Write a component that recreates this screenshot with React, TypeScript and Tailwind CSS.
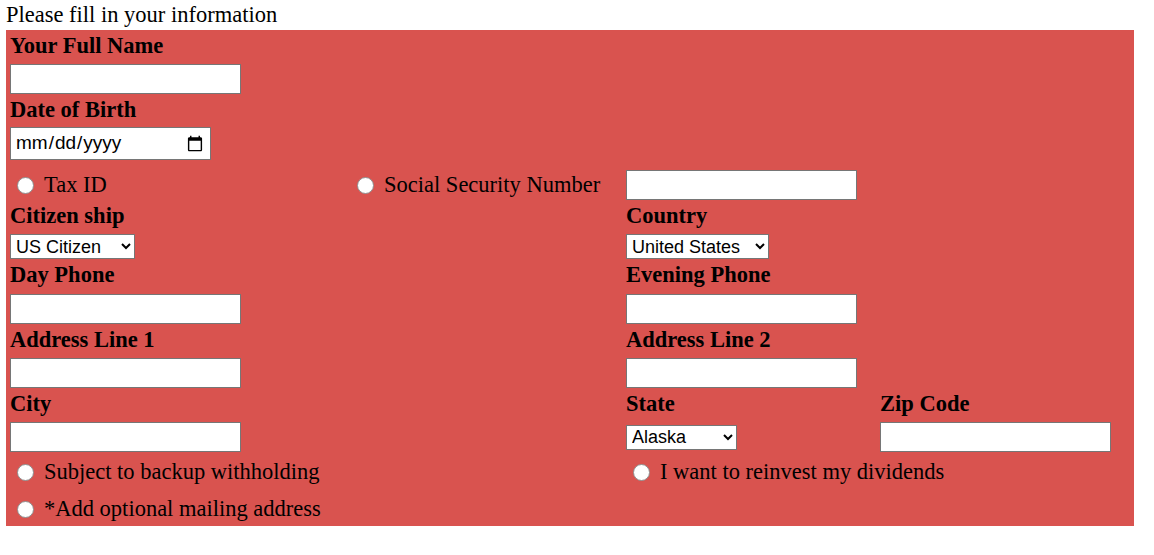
import React from 'react';

const cols = 'grid grid-cols-[340px_276px_254px_1fr]';

function Label({ children }: { children: React.ReactNode }) {
  return <div className="h-[24px] leading-[24px] font-bold whitespace-nowrap">{children}</div>;
}

function TextBox({ width = 'w-[231px]' }: { width?: string }) {
  return (
    <input
      type="text"
      className={`block ${width} h-[30px] border border-[#767676] bg-white px-[3px] text-[18px] font-['Liberation_Sans',Arial,sans-serif] outline-none`}
    />
  );
}

function Choice({ label, name }: { label: string; name: string }) {
  return (
    <label className="flex items-center h-[24px] leading-[24px] whitespace-nowrap">
      <input
        type="radio"
        name={name}
        className="ml-[7px] mr-[10px] w-[17px] h-[17px] shrink-0 appearance-none rounded-full border border-[#8f8f8f] bg-white"
      />
      {label}
    </label>
  );
}

function Picker({ width, options }: { width: string; options: string[] }) {
  return (
    <select
      className={`block ${width} h-[25px] border border-[#767676] bg-white pl-[1px] text-[18px] text-black font-['Liberation_Sans',Arial,sans-serif]`}
    >
      {options.map((o) => (
        <option key={o}>{o}</option>
      ))}
    </select>
  );
}

export default function App() {
  return (
    <div className="w-[1154px] h-[555px] bg-white px-[6px] text-black text-[22.5px] font-['Liberation_Serif','Times_New_Roman',serif]">
      <div className="h-[30px] pt-[1px] leading-[28px]">Please fill in your information</div>

      <form className="w-[1128px] bg-[#d9534f] pl-[4px] pb-[5px]">
        <div className="pt-[4px]">
          <Label>Your Full Name</Label>
        </div>
        <div className="mt-[6px]">
          <TextBox />
        </div>

        <div className="mt-[4px]">
          <Label>Date of Birth</Label>
        </div>
        <div className="mt-[5px]">
          <input
            type="date"
            className="block w-[201px] h-[33px] border border-[#767676] bg-white px-[4px] text-[19px] font-['Liberation_Sans',Arial,sans-serif] [&::-webkit-calendar-picker-indicator]:w-[18px] [&::-webkit-calendar-picker-indicator]:h-[18px]"
          />
        </div>

        {/* id choice */}
        <div className={`${cols} mt-[10px] h-[30px] items-center`}>
          <Choice name="idtype" label="Tax ID" />
          <Choice name="idtype" label="Social Security Number" />
          <TextBox />
        </div>

        <div className={`${cols} mt-[4px]`}>
          <Label>Citizen ship</Label>
          <div />
          <Label>Country</Label>
        </div>
        <div className={`${cols} mt-[6px]`}>
          <Picker width="w-[125px]" options={['US Citizen', 'Resident Alien', 'Non-Resident Alien']} />
          <div />
          <Picker width="w-[143px]" options={['United States', 'Canada', 'Mexico']} />
        </div>

        <div className={`${cols} mt-[4px]`}>
          <Label>Day Phone</Label>
          <div />
          <Label>Evening Phone</Label>
        </div>
        <div className={`${cols} mt-[7px]`}>
          <TextBox />
          <div />
          <TextBox />
        </div>

        <div className={`${cols} mt-[4px]`}>
          <Label>Address Line 1</Label>
          <div />
          <Label>Address Line 2</Label>
        </div>
        <div className={`${cols} mt-[6px]`}>
          <TextBox />
          <div />
          <TextBox />
        </div>

        <div className={`${cols} mt-[4px]`}>
          <Label>City</Label>
          <div />
          <Label>State</Label>
          <Label>Zip Code</Label>
        </div>
        <div className={`${cols} mt-[6px] h-[30px] items-center`}>
          <TextBox />
          <div />
          <Picker width="w-[111px]" options={['Alaska', 'Alabama', 'Arizona']} />
          <TextBox />
        </div>

        <div className={`${cols} mt-[8px]`}>
          <Choice name="backup" label="Subject to backup withholding" />
          <div />
          <Choice name="reinvest" label="I want to reinvest my dividends" />
        </div>
        <div className="mt-[13px]">
          <Choice name="mailing" label="*Add optional mailing address" />
        </div>
      </form>
    </div>
  );
}
